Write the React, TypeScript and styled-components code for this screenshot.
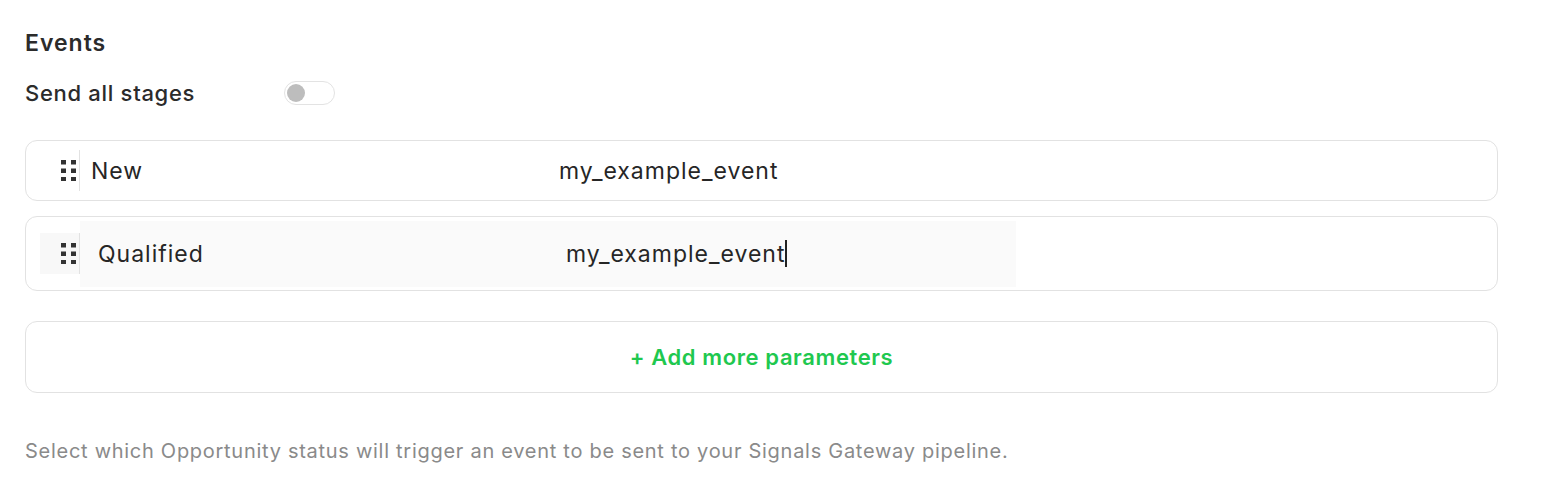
import styled, { createGlobalStyle } from 'styled-components'

const GlobalStyle = createGlobalStyle`
  body {
    margin: 0;
    background: #fff;
    font-family: Inter, "Noto Sans", sans-serif;
    color: #2b2b2b;
  }
`

const Page = styled.div`
  width: 1473px;
  padding: 26px 0 0 25px;
`

const Title = styled.h2`
  margin: 0;
  font-size: 23px;
  font-weight: 600;
  letter-spacing: 1px;
  line-height: 34px;
`

const ToggleRow = styled.div`
  display: flex;
  align-items: center;
  height: 34px;
  margin-top: 16px;
`

const ToggleLabel = styled.span`
  width: 259px;
  font-size: 22px;
  font-weight: 500;
  letter-spacing: 0.7px;
`

const Switch = styled.div`
  box-sizing: border-box;
  width: 51px;
  height: 24px;
  border: 1px solid #e3e3e3;
  border-radius: 12px;
  padding: 2px;
  display: flex;
  align-items: center;
`

const Knob = styled.span`
  width: 18px;
  height: 18px;
  border-radius: 50%;
  background: #bdbdbd;
`

const List = styled.div`
  display: flex;
  flex-direction: column;
  gap: 15px;
  margin-top: 30px;
`

const Row = styled.div<{ $height: number }>`
  box-sizing: border-box;
  height: ${p => p.$height}px;
  border: 1px solid #e2e2e2;
  border-radius: 12px;
  padding: 0 14px;
  display: flex;
  align-items: center;
`

const HandleCell = styled.div<{ $active?: boolean }>`
  box-sizing: border-box;
  width: 40px;
  height: 41px;
  border-right: 1px solid #e2e2e2;
  background: ${p => (p.$active ? '#f8f8f8' : 'transparent')};
  display: flex;
  align-items: center;
  justify-content: flex-end;
  padding-right: 3px;
`

const Cell = styled.div<{ $active?: boolean }>`
  box-sizing: border-box;
  width: 468px;
  height: ${p => (p.$active ? 66 : 41)}px;
  padding-left: ${p => (p.$active ? 18 : 11)}px;
  background: ${p => (p.$active ? '#fafafa' : 'transparent')};
  display: flex;
  align-items: center;
  font-size: 23px;
  letter-spacing: 1px;
  color: #262626;
`

const Caret = styled.span`
  display: inline-block;
  width: 1.5px;
  height: 27px;
  background: #222;
`

const AddButton = styled.button`
  box-sizing: border-box;
  height: 72px;
  margin-top: 15px;
  border: 1px solid #e2e2e2;
  border-radius: 12px;
  background: #fff;
  font-family: inherit;
  font-size: 22px;
  font-weight: 600;
  letter-spacing: 0.6px;
  color: #1fc84f;
  cursor: pointer;
`

const Hint = styled.p`
  margin: 46px 0 0;
  font-size: 20px;
  letter-spacing: 0.72px;
  color: #8a8a8a;
`

const DragHandle = () => (
  <svg width="15" height="21" viewBox="0 0 15 21">
    {[0, 8.5, 17].map(y =>
      [0, 10].map(x => <rect key={`${x}-${y}`} x={x} y={y} width="5" height="4.5" fill="#333" />)
    )}
  </svg>
)

const events = [
  { stage: 'New', name: 'my_example_event', active: false },
  { stage: 'Qualified', name: 'my_example_event', active: true },
]

export default function App() {
  return (
    <>
      <GlobalStyle />
      <Page>
        <Title>Events</Title>
        <ToggleRow>
          <ToggleLabel>Send all stages</ToggleLabel>
          <Switch>
            <Knob />
          </Switch>
        </ToggleRow>
        <List>
          {events.map(ev => (
            <Row key={ev.stage} $height={ev.active ? 75 : 61}>
              <HandleCell $active={ev.active}>
                <DragHandle />
              </HandleCell>
              <Cell $active={ev.active}>{ev.stage}</Cell>
              <Cell $active={ev.active}>
                {ev.name}
                {ev.active && <Caret />}
              </Cell>
            </Row>
          ))}
          <AddButton>+ Add more parameters</AddButton>
        </List>
        <Hint>Select which Opportunity status will trigger an event to be sent to your Signals Gateway pipeline.</Hint>
      </Page>
    </>
  )
}
